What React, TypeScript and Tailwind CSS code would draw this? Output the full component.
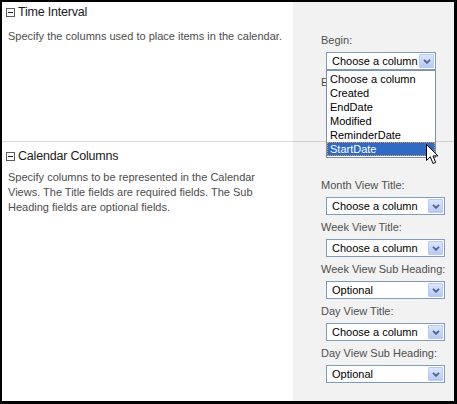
import React from 'react';

const columnOptions = ['Choose a column', 'Created', 'EndDate', 'Modified', 'ReminderDate', 'StartDate'];

function MinusBox() {
  return (
    <svg width="9" height="9" viewBox="0 0 9 9" className="shrink-0">
      <rect x="0.5" y="0.5" width="8" height="8" fill="#fff" stroke="#5c5c5c" />
      <line x1="2" y1="4.5" x2="7" y2="4.5" stroke="#222" strokeWidth="1" />
    </svg>
  );
}

function Chevron() {
  return (
    <svg width="8" height="5" viewBox="0 0 8 5">
      <path d="M1 0.8 L4 3.8 L7 0.8" fill="none" stroke="#4d6185" strokeWidth="1.8" />
    </svg>
  );
}

function Select({ value, width }: { value: string; width: string }) {
  return (
    <div className={`flex h-[18px] items-center border border-[#7f9db9] bg-white ${width}`}>
      <span className="flex-1 overflow-hidden whitespace-nowrap pl-[5px] text-[11px] leading-none text-black">
        {value}
      </span>
      <span className="mr-[1px] flex h-[14px] w-[15px] shrink-0 items-center justify-center rounded-[1px] border border-[#b7cbf6] bg-gradient-to-b from-[#dbe5fd] to-[#b5c9f7]">
        <Chevron />
      </span>
    </div>
  );
}

function Field({ label, value, width = 'w-[119px]', children }: { label: string; value: string; width?: string; children?: React.ReactNode }) {
  return (
    <div className="mb-[5px]">
      <div className="h-[14px] whitespace-nowrap text-[11px] leading-[14px] text-[#4f4f4f]">{label}</div>
      <div className="relative ml-[5px] mt-[5px]">
        <Select value={value} width={width} />
        {children}
      </div>
    </div>
  );
}

function Heading({ title }: { title: string }) {
  return (
    <div className="flex h-[14px] items-center gap-[3px] pl-[4px]">
      <MinusBox />
      <span className="text-[12.5px] leading-[14px] tracking-[-0.2px] text-[#1a1a1a]">{title}</span>
    </div>
  );
}

export default function App() {
  return (
    <div className="relative h-[404px] w-[457px] bg-black pb-[3px] pl-[2px] pr-[3px] pt-[2px] font-['Liberation_Sans',Arial,sans-serif]">
      <div className="flex h-full w-full flex-col bg-white">
        {/* Time Interval */}
        <section className="relative z-10 flex h-[139px]">
          <div className="w-[291px] pt-[3px]">
            <Heading title="Time Interval" />
            <p className="ml-[6px] mt-[10px] whitespace-nowrap text-[11px] leading-[15px] text-[#4c4c4c]">
              Specify the columns used to place items in the calendar.
            </p>
          </div>
          <div className="flex-1 bg-[#f2f2f2] pl-[28px] pt-[31px]">
            <Field label="Begin:" value="Choose a column" width="w-[110px]">
              <ul className="absolute left-0 top-[18px] z-10 w-[110px] border border-[#7590b0] bg-white py-[1px] text-[11px] leading-[14px] text-black">
                {columnOptions.map((opt) =>
                  opt === 'StartDate' ? (
                    <li key={opt} className="h-[14px] whitespace-nowrap border border-dotted border-[#e8a040] bg-[#316ac5] pl-[2px] leading-[12px] text-white">
                      {opt}
                    </li>
                  ) : (
                    <li key={opt} className="h-[14px] whitespace-nowrap pl-[3px]">
                      {opt}
                    </li>
                  )
                )}
              </ul>
            </Field>
            <Field label="End:" value="Choose a column" width="w-[110px]" />
          </div>
        </section>

        {/* Calendar Columns */}
        <section className="flex flex-1">
          <div className="w-[291px] border-t border-[#dadada] pt-[7px]">
            <Heading title="Calendar Columns" />
            <p className="ml-[6px] mt-[7px] text-[11px] leading-[15px] text-[#4c4c4c]">
              Specify columns to be represented in the Calendar
              <br />
              Views. The Title fields are required fields. The Sub
              <br />
              Heading fields are optional fields.
            </p>
          </div>
          <div className="flex-1 border-t border-[#cfcfcf] bg-[#f2f2f2] pl-[28px] pt-[36px]">
            <Field label="Month View Title:" value="Choose a column" />
            <Field label="Week View Title:" value="Choose a column" />
            <Field label="Week View Sub Heading:" value="Optional" />
            <Field label="Day View Title:" value="Choose a column" />
            <Field label="Day View Sub Heading:" value="Optional" />
          </div>
        </section>
      </div>

      {/* mouse pointer over the open list */}
      <svg width="13" height="21" viewBox="0 0 13 21" className="absolute left-[426px] top-[144px] z-20">
        <path d="M0.5 0.5 L0.5 16.5 L4.3 12.8 L7 19.5 L9.6 18.4 L7 11.9 L12 11.9 Z" fill="#fff" stroke="#000" strokeWidth="1" strokeLinejoin="miter" />
      </svg>
    </div>
  );
}
